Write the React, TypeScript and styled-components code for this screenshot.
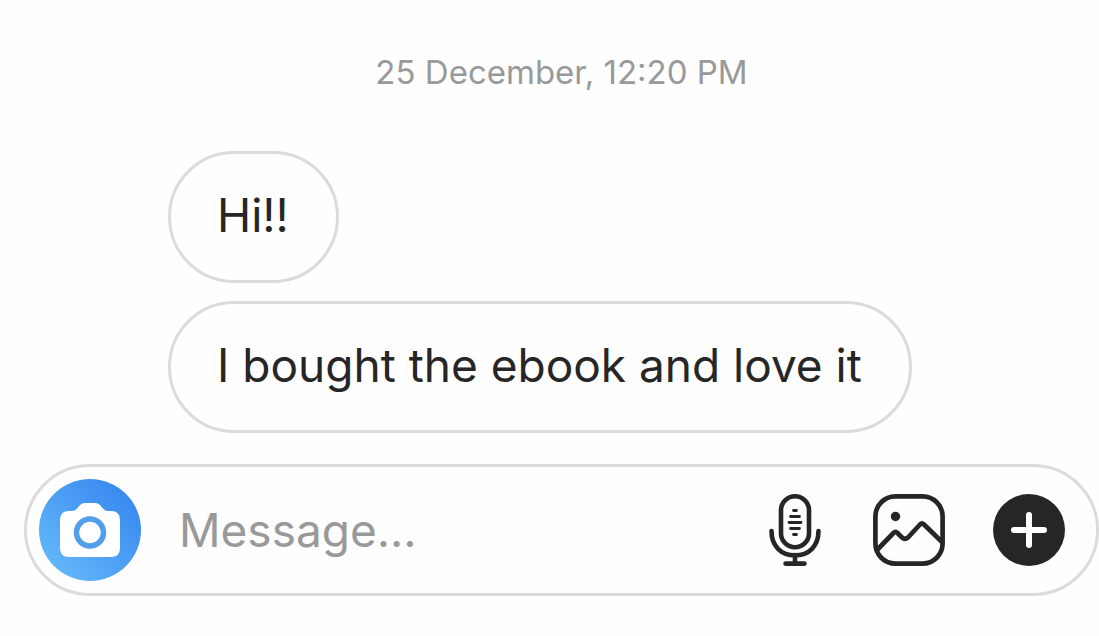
import React from "react";
import styled, { createGlobalStyle } from "styled-components";

const GlobalStyle = createGlobalStyle`
  *, *::before, *::after { box-sizing: border-box; }
  body {
    margin: 0;
    background: #fefefe;
    color: #262626;
    font-family: Inter, "Liberation Sans", sans-serif;
  }
`;

const Chat = styled.main`
  display: flex;
  flex-direction: column;
  padding: 52px 0 40px 24px;
`;

const Timestamp = styled.time`
  align-self: center;
  margin-bottom: 59px;
  color: #999999;
  font-size: 33px;
  line-height: 40px;
`;

const Messages = styled.ul`
  display: flex;
  flex-direction: column;
  align-items: flex-start;
  gap: 18px;
  margin: 0 0 31px;
  padding: 0 0 0 144px;
  list-style: none;
`;

const Bubble = styled.li`
  padding: 31px 47px 35px 46px;
  border: 3px solid #dbdbdb;
  border-radius: 66px;
  font-size: 46px;
  line-height: 60px;
`;

const Composer = styled.form`
  display: flex;
  align-items: center;
  gap: 48px;
  padding: 12px 31px 12px 12px;
  border: 3px solid #dbdbdb;
  border-radius: 66px;
`;

const IconButton = styled.button<{ $width?: number }>`
  display: flex;
  flex: none;
  align-items: center;
  justify-content: center;
  width: ${({ $width = 72 }) => $width}px;
  height: 72px;
  padding: 0;
  border: 0;
  background: none;
  color: #262626;
  cursor: pointer;
`;

const CameraButton = styled(IconButton)`
  width: 102px;
  height: 102px;
  border-radius: 50%;
  background: linear-gradient(45deg, #66bbfa 5%, #3484ee 95%);
  color: #ffffff;
`;

const MessageInput = styled.input`
  flex: 1;
  min-width: 0;
  height: 60px;
  margin-left: -10px;
  padding: 0;
  border: 0;
  outline: 0;
  background: none;
  color: #262626;
  font: inherit;
  font-size: 46px;

  &::placeholder {
    color: #999999;
    opacity: 1;
  }
`;

const CameraIcon = () => (
  <svg width="102" height="102" viewBox="0 0 102 102" aria-hidden="true">
    <path
      fill="currentColor"
      d="M30 32H33Q36 32 38 29.500L41 26Q43 24 46 24H56Q59 24 61 26L64 29.500Q66 32 69 32H72Q81 32 81 41V69Q81 78 72 78H30Q21 78 21 69V41Q21 32 30 32Z"
    />
    <circle cx="51" cy="53.500" r="13.500" fill="none" stroke="#519fea" strokeWidth="5.500" />
  </svg>
);

const MicIcon = () => (
  <svg
    width="60"
    height="72"
    viewBox="0 0 60 72"
    fill="none"
    stroke="currentColor"
    strokeWidth="4.600"
    strokeLinecap="round"
    aria-hidden="true"
  >
    <rect x="16" y="2.300" width="28" height="51" rx="14" />
    <path d="M6.500 37C6.500 52 16 61.300 30 61.300S53.500 52 53.500 37" />
    <path d="M30 61V69M20.500 69.600H39.500" />
    <path
      strokeWidth="2.800"
      d="M28.500 16.500H31.500M25.500 22.500H34.500M24 28.500H36M25.500 34.500H34.500M28.500 40.500H31.500"
    />
  </svg>
);

const PhotoIcon = () => (
  <svg
    width="72"
    height="72"
    viewBox="0 0 72 72"
    fill="none"
    stroke="currentColor"
    strokeWidth="4.700"
    strokeLinecap="round"
    strokeLinejoin="round"
    aria-hidden="true"
  >
    <rect x="2.400" y="2.400" width="67.200" height="67.200" rx="20" />
    <circle cx="22.500" cy="22.500" r="4.700" fill="currentColor" stroke="none" />
    <path d="M4 56L20.500 39Q22.500 37 24.500 39L29 43.500Q32 46 35 43.500L47 30.500Q49 28.500 51 30.500L69 48" />
  </svg>
);

const PlusIcon = () => (
  <svg width="72" height="72" viewBox="0 0 72 72" aria-hidden="true">
    <circle cx="36" cy="36" r="36" fill="currentColor" />
    <path d="M36 21V51M21 36H51" stroke="#ffffff" strokeWidth="6" strokeLinecap="round" />
  </svg>
);

const messages = ["Hi!!", "I bought the ebook and love it"];

export default function App() {
  return (
    <>
      <GlobalStyle />
      <Chat>
        <Timestamp>25 December, 12:20 PM</Timestamp>
        <Messages>
          {messages.map((text) => (
            <Bubble key={text}>{text}</Bubble>
          ))}
        </Messages>
        <Composer onSubmit={(event) => event.preventDefault()}>
          <CameraButton type="button" aria-label="Open camera">
            <CameraIcon />
          </CameraButton>
          <MessageInput type="text" aria-label="Message" placeholder="Message..." />
          <IconButton type="button" $width={60} aria-label="Record voice message">
            <MicIcon />
          </IconButton>
          <IconButton type="button" aria-label="Send photo">
            <PhotoIcon />
          </IconButton>
          <IconButton type="button" aria-label="More options">
            <PlusIcon />
          </IconButton>
        </Composer>
      </Chat>
    </>
  );
}
